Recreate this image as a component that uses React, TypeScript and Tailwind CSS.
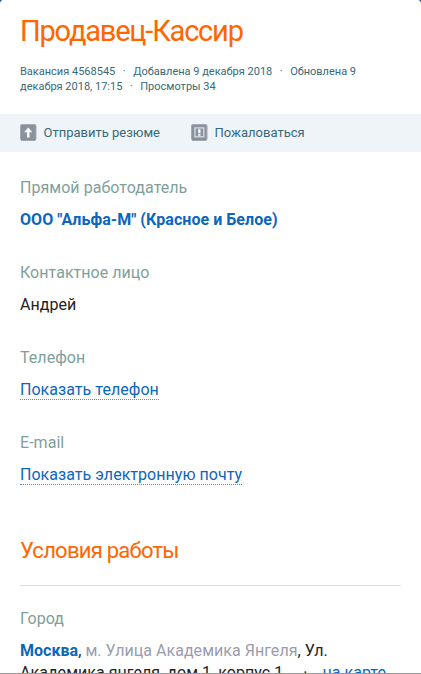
import type { ReactNode } from 'react'

type FieldProps = {
	label: string
	children: ReactNode
}

const Field = ({ label, children }: FieldProps) => {
	return (
		<div className="h-[85px] whitespace-nowrap">
			<div className="h-8 text-[#80a09c]">{label}</div>
			<div>{children}</div>
		</div>
	)
}

const SendIcon = () => {
	return (
		<svg width="16.5" height="16.5" viewBox="0 0 16 16" className="mr-[7px] shrink-0">
			<rect width="16" height="16" rx="2" fill="#a3aab4" />
			<rect x="1" y="1" width="14" height="14" rx="1" fill="#8a929e" />
			<path d="M1 15.5h14" stroke="#757e89" />
			<path d="M8 3.5 12 8H9.2v5H6.8V8H4z" fill="#fff" />
		</svg>
	)
}

const ComplainIcon = () => {
	return (
		<svg width="16.5" height="16.5" viewBox="0 0 16 16" className="mr-[7px] shrink-0">
			<rect width="16" height="16" rx="2" fill="#a3aab4" />
			<rect x="1" y="1" width="14" height="14" rx="1" fill="#8a929e" />
			<path d="M1 15.5h14" stroke="#757e89" />
			<rect x="3.8" y="3.8" width="8.6" height="8.6" fill="none" stroke="#d5dae1" strokeWidth="1.3" />
			<path d="M7 5h2.2v4H7zM7 9.8h2.2v1.5H7z" fill="#fff" />
		</svg>
	)
}

const dottedLink =
	'inline-block h-[22px] border-b border-dotted border-[#4a8fd0] text-[#0b66bd] align-top'

export default function App() {
	return (
		<main className="relative h-[674px] w-[421px] overflow-hidden bg-white font-['Roboto',sans-serif] text-base leading-[23px] tracking-[0.04px] text-[#222]">
			<svg width="421" height="3" className="absolute left-0 top-0">
				<path d="M0 0h2.5Q.5.5 0 3zM421 0h-2.5q2 .5 2.5 3z" fill="#2f5b92" />
			</svg>

			<header className="h-[114px] px-5 pt-3.5">
				<h1 className="h-[50px] whitespace-nowrap text-[29px] leading-[34px] tracking-[-1.2px] text-[#ff6600]">
					Продавец-Кассир
				</h1>
				<div className="whitespace-pre text-[11px] leading-[15px] tracking-normal text-[#386978]">
					<div>
						Вакансия 4568545<span className="mx-[7.5px]">·</span>Добавлена 9 декабря 2018
						<span className="mx-[7.5px]">·</span>Обновлена 9
					</div>
					<div>
						декабря 2018, 17:15<span className="mx-[7.5px]">·</span>Просмотры 34
					</div>
				</div>
			</header>

			<nav className="flex h-[38px] items-center bg-[#eff4f9] px-5 text-[13px] tracking-normal whitespace-nowrap text-[#386978]">
				<a className="-mt-px flex w-[171px] items-center">
					<SendIcon />
					Отправить резюме
				</a>
				<a className="-mt-px flex items-center">
					<ComplainIcon />
					Пожаловаться
				</a>
			</nav>

			<section className="h-[385px] px-5 pt-6">
				<Field label="Прямой работодатель">
					<a className="font-bold text-[#0b66bd]">ООО "Альфа-М" (Красное и Белое)</a>
				</Field>
				<Field label="Контактное лицо">Андрей</Field>
				<Field label="Телефон">
					<a className={dottedLink}>Показать телефон</a>
				</Field>
				<Field label="E-mail">
					<a className={dottedLink}>Показать электронную почту</a>
				</Field>
			</section>

			<section className="px-5">
				<h2 className="h-[49px] border-b border-[#d3e1e2] text-[22px] leading-7 tracking-[-0.75px] text-[#ff6600]">
					Условия работы
				</h2>
				<div className="pt-[21px]">
					<Field label="Город">
						<div>
							<b className="text-[#0b66bd]">Москва</b>,{' '}
							<span className="text-[#999caf]">м. Улица Академика Янгеля</span>, Ул.
						</div>
						<div className="-mt-px">
							Академика янгеля, дом 1, корпус 1<span className="ml-5 mr-[15px]">·</span>
							<a className="text-[#0b66bd]">на карте</a>
						</div>
					</Field>
				</div>
			</section>
			<div className="absolute bottom-0 left-0 h-px w-full bg-[#999]" />
		</main>
	)
}
